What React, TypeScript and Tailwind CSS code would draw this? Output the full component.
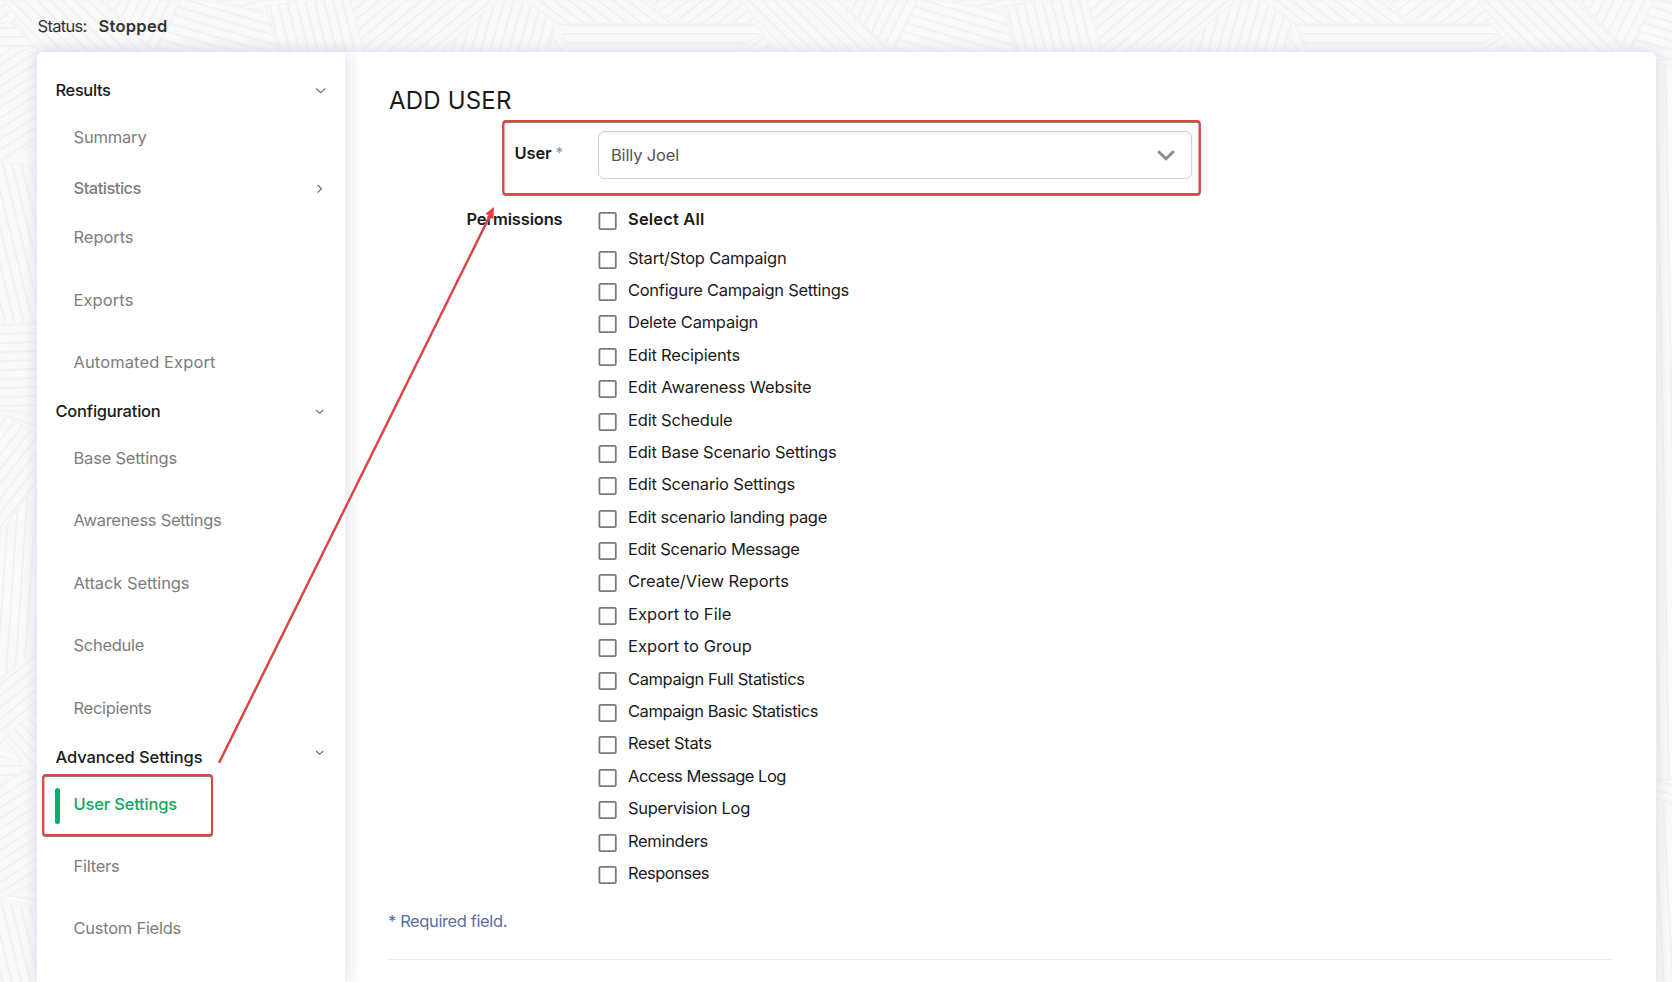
import { useLayoutEffect, useRef, useState } from "react";

type FitProps = { children: string; width: number; className?: string };

/** Text whose tracking is adjusted so that it fills the given width. */
function Fit({ children, width, className = "" }: FitProps) {
  const ref = useRef<HTMLSpanElement>(null);
  const [spacing, setSpacing] = useState(0);
  useLayoutEffect(() => {
    if (ref.current) {
      const natural = ref.current.getBoundingClientRect().width;
      setSpacing((width + 1 - natural) / children.length);
    }
  }, [children, width]);
  return (
    <span
      ref={ref}
      className={`inline-block whitespace-nowrap ${className}`}
      style={{ letterSpacing: `${spacing}px` }}
    >
      {children}
    </span>
  );
}

type Patch = { points: string; angle: number; dx?: number; dy?: number };

const topPatches: Patch[] = [
  { points: "3,0 105,0 156,56 53,56", angle: 45 },
  { points: "105,0 181,0 157,54", angle: 117 },
  { points: "181,0 200,0 262,11 266,8 280,60 152,60 157,50", angle: 16.5 },
  { points: "198,0 300,0 253,9", angle: -14 },
  { points: "266,6 350,-3 366,56 280,56", angle: 76 },
  { points: "350,0 500,0 440,56 366,56", angle: -40 },
  { points: "498,0 526,0 555,23 549,56 436,56", angle: 106 },
  { points: "526,0 640,0 678,23 558,23", angle: 38 },
  { points: "648,0 740,0 760,23 676,23", angle: -38 },
  { points: "558,24 753,24 763,33 723,56 573,56", angle: 0, dy: 6 },
  { points: "555,30 575,56 548,56", angle: 55 },
  { points: "723,56 763,34 778,56", angle: -35 },
];

const leftPatches: Patch[] = [
  { points: "-2,24 8,22 37,46 -2,60", angle: 0 },
  { points: "-2,60 12,45 40,56 40,142 -2,162", angle: -32 },
  { points: "-2,160 40,168 40,323 -2,324", angle: 76 },
  { points: "-2,323 40,322 40,412 -2,410", angle: -2 },
  { points: "-2,410 40,416 40,436", angle: 20 },
  { points: "-2,412 40,435 40,478 0,535", angle: -52 },
  { points: "0,535 24,500 40,478 40,650 -2,680", angle: 94 },
  { points: "0,680 40,645 40,712 -2,745", angle: -39 },
  { points: "4,738 24,720 40,712 40,786", angle: 47 },
  { points: "-2,755 20,762 24,774 -2,784", angle: 0 },
  { points: "-2,784 24,770 40,782 40,880 -2,900", angle: -32 },
  { points: "-2,898 40,886 40,906", angle: 9 },
  { points: "-2,900 40,910 40,984 -2,984", angle: 76 },
];

const rightPatches: Patch[] = [
  { points: "1652,62 1674,66 1674,780 1652,780", angle: 89 },
  { points: "1652,780 1674,780 1674,803 1652,797", angle: 17 },
  { points: "1652,798 1674,804 1674,984 1652,984", angle: 87 },
];

function HatchedPatch({ patch, id }: { patch: Patch; id: string }) {
  return (
    <g>
      <pattern
        id={id}
        width="40"
        height="9"
        patternUnits="userSpaceOnUse"
        patternTransform={`translate(${patch.dx ?? 0} ${patch.dy ?? 0}) rotate(${patch.angle})`}
      >
        <rect width="40" height="2" fill="#f2f2f2" />
      </pattern>
      <polygon points={patch.points} fill="#fafafa" />
      <polygon points={patch.points} fill={`url(#${id})`} stroke="#f4f4f4" strokeWidth="1.2" />
    </g>
  );
}

function Backdrop() {
  return (
    <svg className="absolute inset-0 -z-20" width="1672" height="982" aria-hidden="true">
      {[-737, 0, 737, 1474].map((shift, t) => (
        <g key={shift} transform={`translate(${shift} 0)`}>
          {topPatches.map((p, i) => (
            <HatchedPatch key={i} patch={p} id={`top-${t}-${i}`} />
          ))}
        </g>
      ))}
      {leftPatches.map((p, i) => (
        <HatchedPatch key={i} patch={p} id={`left-${i}`} />
      ))}
      {rightPatches.map((p, i) => (
        <HatchedPatch key={i} patch={p} id={`right-${i}`} />
      ))}
    </svg>
  );
}

type Item = {
  label: string;
  width: number;
  margin: string;
  kind?: "heading" | "active" | "group";
  icon?: "down" | "down-small" | "right";
};

const menu: Item[] = [
  { label: "Results", width: 54, margin: "mt-[26px]", kind: "heading", icon: "down" },
  { label: "Summary", width: 72, margin: "mt-[23px]" },
  { label: "Statistics", width: 66.5, margin: "mt-[27px]", kind: "group", icon: "right" },
  { label: "Reports", width: 59, margin: "mt-[25px]" },
  { label: "Exports", width: 59, margin: "mt-[39px]" },
  { label: "Automated Export", width: 141, margin: "mt-[38px]" },
  { label: "Configuration", width: 104, margin: "mt-[25px]", kind: "heading", icon: "down-small" },
  { label: "Base Settings", width: 102.5, margin: "mt-[23px]" },
  { label: "Awareness Settings", width: 147, margin: "mt-[38px]" },
  { label: "Attack Settings", width: 115, margin: "mt-[39px]" },
  { label: "Schedule", width: 69.5, margin: "mt-[38px]" },
  { label: "Recipients", width: 77, margin: "mt-[39px]" },
  { label: "Advanced Settings", width: 146, margin: "mt-[25px]", kind: "heading" },
  { label: "User Settings", width: 102.5, margin: "mt-[23px]", kind: "active" },
  { label: "Filters", width: 45, margin: "mt-[38px]" },
  { label: "Custom Fields", width: 106.5, margin: "mt-[38px]" },
];

function MenuIcon({ icon }: { icon: NonNullable<Item["icon"]> }) {
  const paths = {
    down: "M4 6.5 L8.7 10.7 L13.4 6.5",
    "down-small": "M4 7 L7.7 10.2 L11.4 7",
    right: "M5.8 5 L9.4 8.8 L5.8 12.6",
  };
  return (
    <svg width="17" height="17" viewBox="0 0 17 17" fill="none" stroke="#777" strokeWidth="1.3">
      <path d={paths[icon]} />
    </svg>
  );
}

function Sidebar() {
  return (
    <nav className="flex w-[308px] shrink-0 flex-col rounded-tl-md bg-white shadow-[6px_0_12px_rgba(205,208,228,0.4)]">
      {menu.map((item) => {
        const heading = item.kind === "heading";
        const tone = heading
          ? "font-medium text-[#1b1b1b]"
          : item.kind === "active"
            ? "font-medium text-[#12a860]"
            : item.kind === "group"
              ? "font-medium text-[#7d7d7d]"
              : "text-[#7d7d7d]";
        return (
          <div
            key={item.label}
            className={`relative flex h-6 shrink-0 items-center justify-between pr-4 ${heading ? "pl-[18.5px]" : "pl-[36.5px]"} ${item.margin}`}
          >
            {item.kind === "active" && (
              <span className="absolute top-[-4px] left-[18px] h-9 w-[5px] rounded-full bg-[#00b26a]" />
            )}
            <Fit width={item.width} className={tone}>
              {item.label}
            </Fit>
            {item.icon && <MenuIcon icon={item.icon} />}
            {item.label === "Advanced Settings" && (
              <span className="-mt-2.5">
                <MenuIcon icon="down-small" />
              </span>
            )}
          </div>
        );
      })}
    </nav>
  );
}

const permissions: [string, number][] = [
  ["Start/Stop Campaign", 157.5],
  ["Configure Campaign Settings", 220],
  ["Delete Campaign", 129],
  ["Edit Recipients", 111],
  ["Edit Awareness Website", 182.5],
  ["Edit Schedule", 103.5],
  ["Edit Base Scenario Settings", 207.5],
  ["Edit Scenario Settings", 166],
  ["Edit scenario landing page", 198],
  ["Edit Scenario Message", 170.5],
  ["Create/View Reports", 160],
  ["Export to File", 102.5],
  ["Export to Group", 123],
  ["Campaign Full Statistics", 175.5],
  ["Campaign Basic Statistics", 189],
  ["Reset Stats", 82.5],
  ["Access Message Log", 157],
  ["Supervision Log", 121],
  ["Reminders", 79],
  ["Responses", 80],
];

function Box() {
  return (
    <svg className="shrink-0" width="19" height="18" viewBox="0 0 19 18" fill="#fff" stroke="#7b7b7b" strokeWidth="1.8">
      <rect x="1.4" y="0.9" width="16.4" height="16.2" rx="1.2" />
    </svg>
  );
}

function Annotations() {
  return (
    <svg className="pointer-events-none absolute inset-0" width="1672" height="982" fill="none" aria-hidden="true">
      <g stroke="#808080" strokeWidth="2" transform="translate(0 1)">
        <rect x="503.3" y="121" width="696.4" height="73" rx="2.5" />
        <rect x="43.2" y="775" width="168.8" height="60" rx="2.5" />
      </g>
      <g stroke="#f03e3e" strokeWidth="2">
        <rect x="503.3" y="121" width="696.4" height="73" rx="2.5" />
        <rect x="43.2" y="775" width="168.8" height="60" rx="2.5" />
      </g>
      <path d="M219.3 763 L491 214" stroke="#808080" strokeWidth="2" />
      <path d="M219 762.5 L490.5 214" stroke="#f03e3e" strokeWidth="2" />
      <path d="M494 207 L485.6 213.4 L493.4 219.2 Z" fill="#e83e3e" />
    </svg>
  );
}

export default function App() {
  return (
    <div className="relative isolate flex h-[982px] w-[1672px] flex-col overflow-hidden bg-[#fafafa] font-['Inter',sans-serif] text-[16.5px] leading-6 text-[#1b1b1b]">
      <Backdrop />
      <header className="flex h-[52px] shrink-0 items-center pl-[37.5px] text-[#333]">
        <div className="flex gap-3">
          <Fit width={48}>Status:</Fit>
          <Fit width={68} className="font-semibold">
            Stopped
          </Fit>
        </div>
      </header>

      <div className="ml-[37px] flex h-[930px] w-[1619px] shrink-0 rounded-t-md bg-white shadow-[0_0_14px_3px_rgba(205,208,228,0.5)]">
        <Sidebar />
        <main className="flex flex-1 flex-col pr-[43px] pl-[43px]">
          <h1 className="mt-8 h-[34px] pl-px text-[24px] leading-[34px]">
            <Fit width={121.5}>ADD USER</Fit>
          </h1>
          <div className="mt-[13px] flex h-12">
            <div className="flex w-[175px] justify-end gap-1">
              <Fit width={36} className="mt-[10px] font-semibold">
                User
              </Fit>
              <span className="mt-[10px] text-[15px] text-[#7d92bd]">*</span>
            </div>
            <div className="ml-[35px] flex h-12 w-[594px] items-center justify-between rounded-md border border-[#d3d3d3] bg-white pr-4 pl-3 shadow-[inset_0_2px_2px_rgba(0,0,0,0.05)]">
              <Fit width={67} className="text-[#555]">
                Billy Joel
              </Fit>
              <svg width="18" height="12" viewBox="0 0 18 12" fill="none" stroke="#8a8a8a" strokeWidth="2.8">
                <path d="M1.2 2.2 L9 9.8 L16.8 2.2" />
              </svg>
            </div>
          </div>

          <div className="mt-[28px] flex">
            <div className="w-[174.5px] text-right">
              <Fit width={95} className="font-semibold">
                Permissions
              </Fit>
            </div>
            <div className="ml-[35.5px]">
              <label className="flex h-[28px] items-center gap-[11px]">
                <Box />
                <Fit width={75.5} className="mt-[-4px] font-semibold">
                  Select All
                </Fit>
              </label>
              <ul className="mt-[8.4px]">
                {permissions.map(([label, width]) => (
                  <li key={label} className="flex h-[32.4px] items-center gap-[11px]">
                    <Box />
                    <Fit width={width} className="mt-[-4px]">
                      {label}
                    </Fit>
                  </li>
                ))}
              </ul>
            </div>
          </div>

          <p className="mt-[18px] h-6 text-[#5a70a2]">
            <Fit width={118}>* Required field.</Fit>
          </p>
          <hr className="mt-[25.6px] border-[#ebebeb]" />
        </main>
      </div>
      <Annotations />
    </div>
  );
}
